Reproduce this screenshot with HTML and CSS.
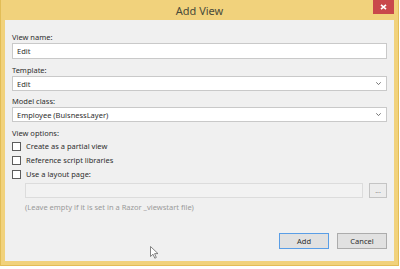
FILE: index.html
```html
<!DOCTYPE html>
<html lang="en">
<head>
    <meta charset="UTF-8">
    <title>Add View</title>
    <link rel="stylesheet" href="styles.css">
</head>
<body>
    <div class="window">
        <div class="titlebar">
            <span class="title">Add View</span>
            <span class="close">
                <svg width="7" height="6" viewBox="0 0 7 6"><path d="M1 0.8 L6 5.2 M6 0.8 L1 5.2" stroke="#fff" stroke-width="1.6"/></svg>
            </span>
        </div>
        <div class="content">
            <div class="field first">
                <div class="label">View name:</div>
                <div class="textbox">Edit</div>
            </div>
            <div class="field">
                <div class="label">Template:</div>
                <div class="textbox select">
                    <span>Edit</span>
                    <svg class="arrow" width="5" height="3" viewBox="0 0 5 3"><path d="M0.3 0.3 L2.5 2.6 L4.7 0.3" fill="none" stroke="#666" stroke-width="0.9"/></svg>
                </div>
            </div>
            <div class="field tight">
                <div class="label">Model class:</div>
                <div class="textbox select">
                    <span>Employee (BuisnessLayer)</span>
                    <svg class="arrow" width="5" height="3" viewBox="0 0 5 3"><path d="M0.3 0.3 L2.5 2.6 L4.7 0.3" fill="none" stroke="#666" stroke-width="0.9"/></svg>
                </div>
            </div>
            <div class="field">
                <div class="label">View options:</div>
                <div class="check"><span class="box"></span>Create as a partial view</div>
                <div class="check"><span class="box"></span>Reference script libraries</div>
                <div class="check"><span class="box"></span>Use a layout page:</div>
                <div class="layout-row">
                    <div class="textbox disabled"></div>
                    <div class="btn browse">...</div>
                </div>
                <div class="hint">(Leave empty if it is set in a Razor _viewstart file)</div>
            </div>
            <div class="actions">
                <div class="btn default">Add</div>
                <div class="btn">Cancel</div>
            </div>
        </div>
    </div>

    <svg class="cursor" width="9" height="13" viewBox="0 0 9 13">
        <path d="M0.5 0.5 L0.5 10.5 L3 8.2 L4.8 12.2 L6.3 11.5 L4.6 7.6 L8 7.6 Z" fill="#fff" stroke="#666" stroke-width="0.8"/>
    </svg>
</body>
</html>
```

FILE: styles.css
```css
body {
    margin: 0;
    background-color: #fff;
    font-family: "Noto Sans", Arial, sans-serif;
    font-size: 7.5px;
    color: #2e2e2e;
}
.window {
    width: 399px;
    height: 266px;
    box-sizing: border-box;
    background-color: #f1d27c;
    border: 1px solid #e2bd56;
    border-top: none;
    padding: 0 4px 4px 4px;
    display: flex;
    flex-direction: column;
}
.titlebar {
    height: 20px;
    position: relative;
    display: flex;
    justify-content: center;
}
.title {
    font-size: 11px;
    line-height: 21px;
    color: #4a4a3a;
}
.close {
    position: absolute;
    top: 0;
    right: 0;
    width: 21px;
    height: 14px;
    background-color: #c9484b;
    display: flex;
    align-items: center;
    justify-content: center;
}
.content {
    flex: 1;
    background-color: #f0f0f0;
    padding: 11px 7px 12px 7px;
    display: flex;
    flex-direction: column;
}
.field {
    margin-top: 5px;
}
.field.first {
    margin-top: 0;
}
.field.tight {
    margin-top: 4px;
}
.label {
    height: 12px;
    line-height: 12px;
}
.textbox {
    height: 16px;
    box-sizing: border-box;
    background-color: #fff;
    border: 1px solid #c9c9c9;
    padding: 0 4px;
    line-height: 14px;
    display: flex;
    align-items: center;
}
.select {
    height: 15px;
    justify-content: space-between;
    padding-right: 5px;
}
.check {
    height: 14px;
    display: flex;
    align-items: center;
}
.box {
    width: 9px;
    height: 9px;
    box-sizing: border-box;
    border: 1px solid #5c5c5c;
    background-color: #fff;
    margin-right: 5px;
}
.layout-row {
    display: flex;
    gap: 6px;
    margin: 2px 0 0 13px;
}
.layout-row .disabled {
    flex: 1;
    height: 15px;
    background-color: #f2f2f2;
    border-color: #dcdcdc;
}
.hint {
    margin: 3px 0 0 13px;
    height: 12px;
    line-height: 12px;
    color: #9a9a9a;
}
.btn {
    width: 50px;
    height: 16px;
    box-sizing: border-box;
    border: 1px solid #acacac;
    background-color: #e1e1e1;
    display: flex;
    align-items: center;
    justify-content: center;
}
.btn.browse {
    width: 18px;
    height: 15px;
    color: #888;
    font-size: 7px;
    border-color: #c4c4c4;
    background-color: #ececec;
}
.btn.default {
    border-color: #5a9ee6;
}
.actions {
    margin-top: auto;
    display: flex;
    justify-content: flex-end;
    gap: 8px;
}
.cursor {
    position: absolute;
    left: 150px;
    top: 246px;
}
```
